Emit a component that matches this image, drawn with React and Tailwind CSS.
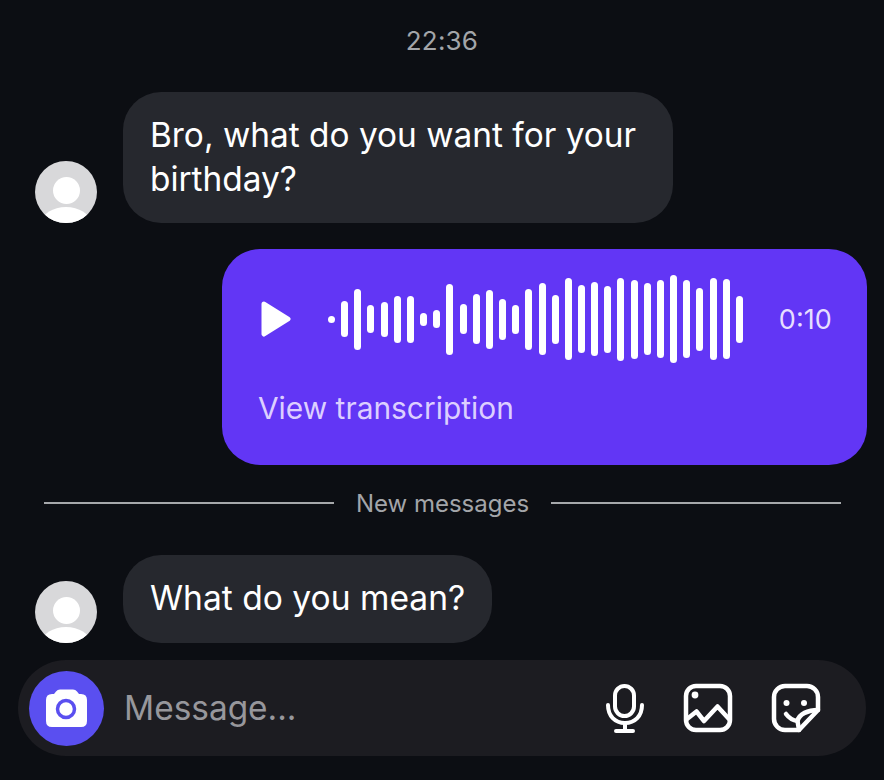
import React from "react";

// bar heights of the voice message, left to right
const bars = [7, 36, 61, 28, 35, 47, 47, 13, 18, 71, 30, 50, 59, 41, 29, 61, 72, 49, 82, 68, 74, 67, 83, 79, 72, 78, 88, 78, 63, 82, 80, 47];

const Avatar = () => (
    <div className="w-[62px] h-[62px] rounded-full bg-[#d8d8da] overflow-hidden shrink-0 relative">
        <div className="absolute left-[18px] top-[16px] w-[27px] h-[27px] rounded-full bg-white"></div>
        <div className="absolute left-[7px] top-[46px] w-[48px] h-[30px] rounded-t-[50%] bg-white"></div>
    </div>
);

const CameraIcon = () => (
    <svg width="41" height="38" viewBox="0 0 41 38">
        <path
            d="M8 5 L10 2.5 Q11.5 0.5 14 0.5 H27 Q29.5 0.5 31 2.5 L33 5 H35 Q41 5 41 11 V32 Q41 38 35 38 H6 Q0 38 0 32 V11 Q0 5 6 5 Z"
            fill="white"
        />
        <circle cx="20" cy="20" r="8.5" fill="none" stroke="#5a4ff0" strokeWidth="3.5" />
    </svg>
);

const MicIcon = () => (
    <svg width="40" height="52" viewBox="0 0 40 52" fill="none" stroke="white" strokeWidth="4" strokeLinecap="round">
        <rect x="10" y="4" width="19" height="30" rx="9.5" />
        <path d="M3 23 C3 34 10 41 20 41 C30 41 37 34 37 23" />
        <path d="M20 41 V49 M11 49 H28" />
    </svg>
);

const ImageIcon = () => (
    <svg width="50" height="50" viewBox="0 0 50 50" fill="none" stroke="white" strokeWidth="4.5" strokeLinecap="round" strokeLinejoin="round">
        <rect x="3" y="3" width="44" height="44" rx="10" />
        <circle cx="12" cy="12" r="3.4" fill="white" stroke="none" />
        <path d="M4 36 L13.5 28.5 L21 38 L34.5 23.5 L46 36" />
    </svg>
);

const StickerIcon = () => (
    <svg width="50" height="50" viewBox="0 0 50 50" fill="none" stroke="white" strokeWidth="4.5" strokeLinecap="round" strokeLinejoin="round">
        <path d="M28 47 H14 A11 11 0 0 1 3 36 V14 A11 11 0 0 1 14 3 H36 A11 11 0 0 1 47 14 V27 L28 47 Z" />
        <path d="M47 27 C37 27 28 31 26.5 38 L28 47" />
        <path d="M15 31 C18 35 22 37.5 26.5 38" />
        <circle cx="15.5" cy="20" r="3" fill="white" stroke="none" />
        <circle cx="33" cy="20" r="3" fill="white" stroke="none" />
    </svg>
);

const App = () => {
    return (
        <div className="w-[884px] h-[780px] overflow-hidden bg-[#0c0e13] text-white font-['Inter',sans-serif]">

            {/* Time */}
            <div className="pt-[25px] h-[92px] text-center text-[26px] leading-[32px] text-[#a3a5a9] tracking-[0.2px]">
                22:36
            </div>

            {/* First message */}
            <div className="flex items-end pl-[35px] gap-[26px]">
                <Avatar />
                <div className="w-[550px] h-[131px] rounded-[38px] bg-[#26282e] pl-[27px] pt-[21px] text-[33.4px] leading-[44px]">
                    Bro, what do you want for your birthday?
                </div>
            </div>

            {/* Voice message */}
            <div className="flex justify-end pr-[17px] mt-[26px]">
                <div className="w-[645px] h-[216px] rounded-[38px] bg-[#6236f5] pl-[37px] pt-[26px]">
                    <div className="flex items-center h-[88px]">
                        <svg width="34" height="38" viewBox="0 0 34 38" className="shrink-0">
                            <path d="M5 4 L29 19 L5 34 Z" fill="white" stroke="white" strokeWidth="5" strokeLinejoin="round" />
                        </svg>
                        <div className="flex items-center gap-[6.17px] ml-[35px]">
                            {bars.map((h, i) => (
                                <div key={i} className="w-[7px] rounded-full bg-white" style={{ height: h }}></div>
                            ))}
                        </div>
                        <span className="ml-[36px] mt-[3px] text-[27px] text-[#e6deff]">0:10</span>
                    </div>
                    <div className="mt-[26px] -ml-[1px] text-[29.9px] leading-[38px] text-[#dccfff]">View transcription</div>
                </div>
            </div>

            {/* Divider */}
            <div className="flex items-center mt-[22px] pl-[44px] pr-[43px] h-[32px]">
                <div className="flex-1 h-[2px] bg-[#a6a8ab]"></div>
                <span className="px-[22px] pt-[1px] text-[24px] text-[#a3a5a9]">New messages</span>
                <div className="flex-1 h-[2px] bg-[#a6a8ab]"></div>
            </div>

            {/* Last message */}
            <div className="flex items-end pl-[35px] gap-[26px] mt-[36px]">
                <Avatar />
                <div className="w-[369px] h-[88px] rounded-[38px] bg-[#26282e] pl-[27px] pb-[2px] flex items-center text-[33.6px]">
                    What do you mean?
                </div>
            </div>

            {/* Input bar */}
            <div className="flex items-center ml-[18px] mt-[17px] w-[848px] h-[96px] rounded-full bg-[#1c1c21] pl-[11px]">
                <div className="w-[75px] h-[75px] rounded-full bg-[#5a4ff0] flex items-center justify-center shrink-0">
                    <CameraIcon />
                </div>
                <span className="ml-[20px] text-[33.4px] text-[#97979c]">Message...</span>
                <div className="flex items-center ml-auto pr-[45px]">
                    <MicIcon />
                    <div className="ml-[38px]"><ImageIcon /></div>
                    <div className="ml-[38px]"><StickerIcon /></div>
                </div>
            </div>

        </div>
    );
};

export default App;
